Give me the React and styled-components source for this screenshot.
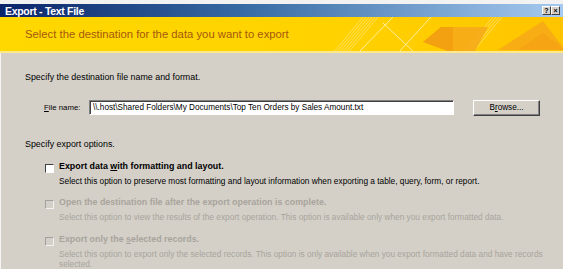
import styled, { createGlobalStyle } from "styled-components";

const Global = createGlobalStyle`
  html, body {
    margin: 0;
    padding: 0;
    background: #d4d0c8;
  }
  body {
    width: 563px;
    height: 269px;
    overflow: hidden;
    font-family: "Liberation Sans", Arial, sans-serif;
  }
`;

const Dialog = styled.div`
  width: 563px;
  height: 269px;
  display: flex;
  flex-direction: column;
  background: #d4d0c8;
  border-top: 4px solid #f2f2f2;
  box-sizing: border-box;
  overflow: hidden;
`;

const TitleBar = styled.div`
  height: 14px;
  display: flex;
  align-items: center;
  justify-content: space-between;
  padding: 0 3px 0 5px;
  background: linear-gradient(to right, #0a246a 0%, #3a6ea5 45%, #a6caf0 100%);
  color: #fff;
  font-weight: bold;
  font-size: 10.5px;
  letter-spacing: -0.3px;
`;

const Caps = styled.div`
  display: flex;
`;

const CapButton = styled.div`
  width: 9px;
  height: 9px;
  box-sizing: border-box;
  background: #d4d0c8;
  border: 1px solid;
  border-color: #fff #404040 #404040 #fff;
  color: #000;
  font-size: 7px;
  font-weight: bold;
  line-height: 7px;
  text-align: center;
  letter-spacing: 0;
`;

const Banner = styled.div`
  position: relative;
  height: 38px;
  display: flex;
  align-items: center;
  padding-left: 25px;
  background: linear-gradient(to right, #ffd800 0%, #ffd200 60%, #ffc400 100%);
  border-bottom: 2px solid #fde88a;
  box-sizing: border-box;
  overflow: hidden;
`;

const BannerText = styled.span`
  position: relative;
  z-index: 1;
  color: #a5580c;
  font-size: 11.3px;
  margin-top: -1px;
`;

const BannerArt = styled.svg`
  position: absolute;
  right: 0;
  top: 0;
`;

const Body = styled.div`
  flex: 1;
  padding-left: 24px;
  border-left: 1px solid #f4f4f4;
  font-size: 8.3px;
  color: #000;
`;

const Note = styled.div`
  font-size: 8.9px;
  line-height: 12px;
  margin-top: ${(p) => p.$top}px;
`;

const FileRow = styled.div`
  display: flex;
  align-items: flex-start;
  margin-top: 17px;
  padding-left: 19px;
  height: 16px;
`;

const FieldLabel = styled.label`
  width: 45px;
  font-size: 7.8px;
  line-height: 15px;
`;

const TextBox = styled.div`
  width: 365px;
  height: 15px;
  box-sizing: border-box;
  background: #fff;
  border: 1px solid;
  border-color: #808080 #ffffff #ffffff #808080;
  box-shadow: inset 1px 1px 0 #404040;
  padding-left: 3px;
  font-size: 8.2px;
  line-height: 13px;
  white-space: nowrap;
  overflow: hidden;
`;

const Button = styled.div`
  width: 67px;
  height: 16px;
  margin-left: 19px;
  box-sizing: border-box;
  border: 1px solid;
  border-color: #ffffff #404040 #404040 #ffffff;
  box-shadow: inset -1px -1px 0 #808080;
  background: #d4d0c8;
  text-align: center;
  line-height: 14px;
  font-size: 8.2px;
`;

const Option = styled.div`
  display: grid;
  grid-template-columns: 9px 1fr;
  column-gap: 5px;
  margin-top: ${(p) => p.$top}px;
  padding-left: 20px;
  color: ${(p) => (p.$disabled ? "#a8a49c" : "#000")};
`;

const Check = styled.div`
  width: 9px;
  height: 9px;
  margin-top: 4px;
  box-sizing: border-box;
  background: ${(p) => (p.$disabled ? "#d4d0c8" : "#fff")};
  border: 1px solid;
  border-color: ${(p) =>
    p.$disabled ? "#a0a0a0 #f0f0f0 #f0f0f0 #a0a0a0" : "#404040 #fff #fff #404040"};
`;

const OptLabel = styled.div`
  font-weight: bold;
  font-size: 8.9px;
  line-height: 12px;
`;

const OptDesc = styled.div`
  grid-column: 2;
  margin-top: 3px;
  line-height: 10px;
  padding-right: 16px;
`;

const options = [
  {
    top: 10,
    label: (
      <>
        Export data <u>w</u>ith formatting and layout.
      </>
    ),
    desc: "Select this option to preserve most formatting and layout information when exporting a table, query, form, or report.",
  },
  {
    top: 10,
    disabled: true,
    label: "Open the destination file after the export operation is complete.",
    desc: "Select this option to view the results of the export operation. This option is available only when you export formatted data.",
  },
  {
    top: 11,
    disabled: true,
    label: (
      <>
        Export only the <u>s</u>elected records.
      </>
    ),
    desc: "Select this option to export only the selected records. This option is only available when you export formatted data and have records selected.",
  },
];

const Art = () => (
  <BannerArt width="260" height="36" viewBox="0 0 260 36">
    <g stroke="#ffe680" strokeWidth="0.8" opacity="0.9">
      {[0, 3, 6, 9, 12, 15].map((d) => (
        <line key={d} x1={30 + d} y1="36" x2={60 + d} y2="0" />
      ))}
      {[0, 3, 6, 9].map((d) => (
        <line key={"b" + d} x1={160 + d} y1="36" x2={190 + d} y2="0" />
      ))}
    </g>
    <g stroke="#fff3b0" strokeWidth="1" opacity="0.9">
      <line x1="55" y1="36" x2="90" y2="0" />
      <line x1="80" y1="6" x2="112" y2="36" />
      <line x1="95" y1="36" x2="128" y2="0" />
    </g>
    <polygon points="120,25 138,10 185,10 172,34 145,34" fill="#f5a81a" opacity="0.85" />
    <polygon points="120,25 138,10 150,10 150,34 145,34" fill="#f29a10" opacity="0.7" />
    <polygon points="195,33 240,4 262,33" fill="#f7a818" opacity="0.85" />
    <polygon points="215,33 240,16 262,33" fill="#f39c12" opacity="0.5" />
  </BannerArt>
);

export default function App() {
  return (
    <>
      <Global />
      <Dialog>
        <TitleBar>
          <span>Export - Text File</span>
          <Caps>
            <CapButton>?</CapButton>
            <CapButton>×</CapButton>
          </Caps>
        </TitleBar>
        <Banner>
          <Art />
          <BannerText>Select the destination for the data you want to export</BannerText>
        </Banner>
        <Body>
          <Note $top={18}>Specify the destination file name and format.</Note>
          <FileRow>
            <FieldLabel>
              <u>F</u>ile name:
            </FieldLabel>
            <TextBox>
              \\.host\Shared Folders\My Documents\Top Ten Orders by Sales Amount.txt
            </TextBox>
            <Button>
              B<u>r</u>owse...
            </Button>
          </FileRow>
          <Note $top={22}>Specify export options.</Note>
          {options.map((o, i) => (
            <Option key={i} $top={o.top} $disabled={o.disabled}>
              <Check $disabled={o.disabled} />
              <OptLabel>{o.label}</OptLabel>
              <OptDesc>{o.desc}</OptDesc>
            </Option>
          ))}
        </Body>
      </Dialog>
    </>
  );
}
